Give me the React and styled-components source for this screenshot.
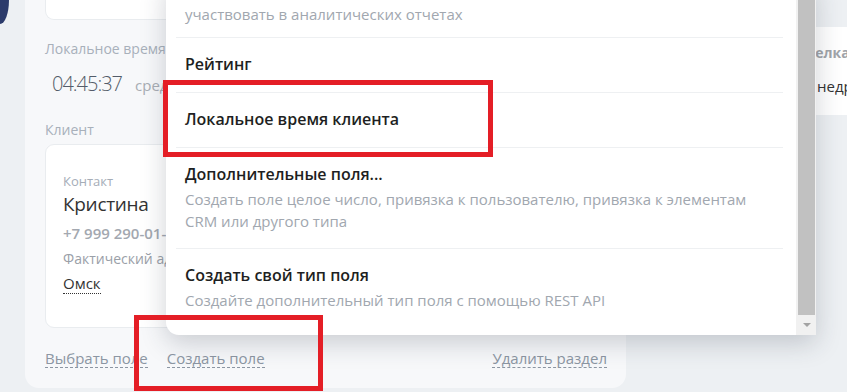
import React from "react";
import styled, { createGlobalStyle } from "styled-components";

const GlobalStyle = createGlobalStyle`
  html, body { margin: 0; padding: 0; }
  body {
    background: #edf0f3;
    font-family: "Open Sans", "Noto Sans", "Liberation Sans", sans-serif;
    overflow: hidden;
  }
`;

const Page = styled.div`
  position: relative;
  width: 847px;
  height: 392px;
  overflow: hidden;
  display: flex;
  align-items: flex-start;
  background: #edf0f3;
`;

const LeftRail = styled.div`
  width: 25px;
  flex-shrink: 0;
`;

const NavCorner = styled.div`
  width: 9px;
  height: 24px;
  background: #2c3b6b;
  border-bottom-right-radius: 9px 24px;
`;

const MainCard = styled.section`
  width: 601px;
  height: 388px;
  flex-shrink: 0;
  box-sizing: border-box;
  background: #f7f8fa;
  border-radius: 0 0 14px 14px;
  padding: 0 19px 0 20px;
  display: flex;
  flex-direction: column;
`;

const TopBox = styled.div`
  height: 20px;
  box-sizing: border-box;
  background: #fff;
  border: 1px solid #e9ecef;
  border-top: none;
  border-radius: 0 0 9px 9px;
`;

const FieldLabel = styled.div`
  margin-top: ${(p) => p.$mt}px;
  font-size: 14px;
  line-height: 20px;
  color: #a8b0ba;
`;

const TimeRow = styled.div`
  margin-top: 11px;
  padding-left: 7px;
  display: flex;
  align-items: baseline;
  gap: 13px;
  line-height: 28px;
`;

const Clock = styled.span`
  font-size: 20px;
  font-weight: 300;
  color: #535c69;
  letter-spacing: -1px;
`;

const Zone = styled.span`
  font-size: 15px;
  color: #a8adb4;
`;

const ClientCard = styled.div`
  margin-top: 4px;
  height: 184px;
  box-sizing: border-box;
  background: #fff;
  border: 1px solid #e9ecef;
  border-radius: 9px;
  padding: 27px 17px 0;
  display: flex;
  flex-direction: column;
  align-items: flex-start;
`;

const SmallLabel = styled.div`
  font-size: 13px;
  line-height: 18px;
  color: #a5adb7;
`;

const Name = styled.div`
  margin-top: 1px;
  font-size: 19px;
  line-height: 26px;
  letter-spacing: -0.3px;
  color: #333;
`;

const Phone = styled.div`
  margin-top: 5px;
  font-size: 15px;
  line-height: 22px;
  font-weight: 600;
  color: #a3a8b0;
  white-space: nowrap;
`;

const Address = styled.div`
  margin-top: 5px;
  font-size: 14px;
  line-height: 20px;
  color: #9aa0a8;
  white-space: nowrap;
`;

const City = styled.span`
  margin-top: 5px;
  display: inline-block;
  font-size: 15px;
  line-height: 19px;
  color: #333;
  border-bottom: 1px dotted #333;
`;

const Footer = styled.div`
  margin-top: auto;
  padding-bottom: 20px;
  display: flex;
  align-items: flex-end;
  gap: 19px;
`;

const DashLink = styled.span`
  display: inline-block;
  font-size: 15px;
  line-height: 18px;
  color: #8c96a3;
  border-bottom: 1px dashed #8c96a3;
  margin-left: ${(p) => (p.$push ? "auto" : "0")};
`;

const RightColumn = styled.div`
  flex: 1;
  padding-top: 27px;
  padding-left: 160px;
`;

const SideCard = styled.div`
  height: 88px;
  box-sizing: border-box;
  background: #fff;
  border-radius: 9px 0 0 9px;
  padding: 15px 0 0 0;
  white-space: nowrap;
  overflow: hidden;
`;

const SideLabel = styled.div`
  padding-left: 11px;
  font-size: 14px;
  line-height: 22px;
  font-weight: 700;
  color: #a0a4a9;
`;

const SideValue = styled.div`
  margin-top: 11px;
  padding-left: 31px;
  font-size: 15px;
  line-height: 22px;
  color: #333;
`;

const Popup = styled.div`
  position: absolute;
  left: 166px;
  top: -20px;
  width: 650px;
  height: 355px;
  background: #fff;
  border-radius: 0 0 0 13px;
  box-shadow: 0 8px 26px rgba(40, 50, 70, 0.22);
  display: flex;
  overflow: hidden;
`;

const MenuList = styled.ul`
  list-style: none;
  margin: 0;
  padding: 0 13px 8px 10px;
  flex: 1;
`;

const MenuItem = styled.li`
  padding: ${(p) => (p.$cut ? "23px 9px 12px" : "14px 9px 16px")};
  border-top: ${(p) => (p.$first ? "none" : "1px solid #eef0f2")};
`;

const ItemTitle = styled.div`
  font-size: 16px;
  line-height: 24px;
  font-weight: 600;
  color: #1e1f22;
`;

const ItemDesc = styled.div`
  margin-top: ${(p) => (p.$flush ? 0 : 2)}px;
  font-size: 15px;
  line-height: 22px;
  color: #a1a7af;
`;

const ScrollTrack = styled.div`
  width: 20px;
  flex-shrink: 0;
  background: #f1f1f1;
  display: flex;
  flex-direction: column;
  padding: 0 1px 0 2px;
  box-sizing: border-box;
`;

const ScrollThumb = styled.div`
  flex: 1;
  background: #c1c1c1;
`;

const ScrollArrow = styled.div`
  height: 20px;
  display: flex;
  align-items: center;
  justify-content: center;
  &::after {
    content: "";
    width: 0;
    height: 0;
    border-left: 4.5px solid transparent;
    border-right: 4.5px solid transparent;
    border-top: 4px solid #a3a3a3;
  }
`;

const Highlight = styled.div`
  position: absolute;
  left: ${(p) => p.$x}px;
  top: ${(p) => p.$y}px;
  width: ${(p) => p.$w}px;
  height: ${(p) => p.$h}px;
  box-sizing: border-box;
  border: 5px solid #e41e26;
  pointer-events: none;
`;

export default function App() {
  return (
    <>
      <GlobalStyle />
      <Page>
        <LeftRail>
          <NavCorner />
        </LeftRail>
        <MainCard>
          <TopBox />
          <FieldLabel $mt={19}>Локальное время</FieldLabel>
          <TimeRow>
            <Clock>04:45:37</Clock>
            <Zone>среда</Zone>
          </TimeRow>
          <FieldLabel $mt={21}>Клиент</FieldLabel>
          <ClientCard>
            <SmallLabel>Контакт</SmallLabel>
            <Name>Кристина</Name>
            <Phone>+7 999 290-01-01</Phone>
            <Address>Фактический адрес</Address>
            <City>Омск</City>
          </ClientCard>
          <Footer>
            <DashLink>Выбрать поле</DashLink>
            <DashLink>Создать поле</DashLink>
            <DashLink $push>Удалить раздел</DashLink>
          </Footer>
        </MainCard>
        <RightColumn>
          <SideCard>
            <SideLabel>Сделка</SideLabel>
            <SideValue>недра</SideValue>
          </SideCard>
        </RightColumn>

        <Popup>
          <MenuList>
            <MenuItem $first $cut>
              <ItemDesc $flush>участвовать в аналитических отчетах</ItemDesc>
            </MenuItem>
            <MenuItem>
              <ItemTitle>Рейтинг</ItemTitle>
            </MenuItem>
            <MenuItem>
              <ItemTitle>Локальное время клиента</ItemTitle>
            </MenuItem>
            <MenuItem>
              <ItemTitle>Дополнительные поля...</ItemTitle>
              <ItemDesc>
                Создать поле целое число, привязка к пользователю, привязка к элементам
                <br />
                CRM или другого типа
              </ItemDesc>
            </MenuItem>
            <MenuItem>
              <ItemTitle>Создать свой тип поля</ItemTitle>
              <ItemDesc>Создайте дополнительный тип поля с помощью REST API</ItemDesc>
            </MenuItem>
          </MenuList>
          <ScrollTrack>
            <ScrollThumb />
            <ScrollArrow />
          </ScrollTrack>
        </Popup>

        <Highlight $x={163} $y={80} $w={330} $h={77} />
        <Highlight $x={134} $y={315} $w={189} $h={76} />
      </Page>
    </>
  );
}
